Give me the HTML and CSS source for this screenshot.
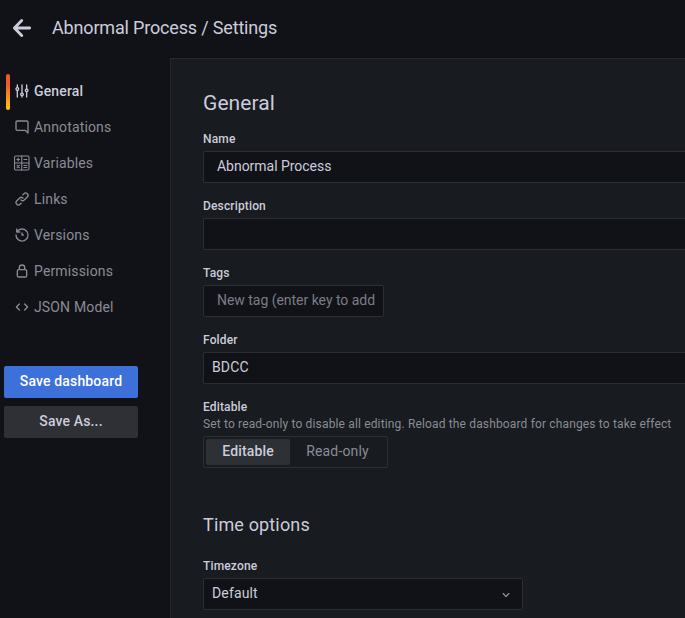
FILE: index.html
```html
<!DOCTYPE html>
<html lang="en">
<head>
<meta charset="utf-8">
<title>Abnormal Process / Settings</title>
<link rel="stylesheet" href="styles.css">
</head>
<body>
<header class="toolbar">
  <svg class="back" viewBox="0 0 20 20"><path d="M17.6 10H3M9.7 2.6 2.4 10l7.3 7.4"/></svg>
  <h1 class="page-title">Abnormal Process / Settings</h1>
</header>
<div class="layout">
  <aside class="sidebar">
    <nav class="menu">
      <a class="item active"><svg class="icon" viewBox="0 0 24 24"><path d="M20,8.18V3a1,1,0,0,0-2,0V8.18a3,3,0,0,0,0,5.64V21a1,1,0,0,0,2,0V13.82a3,3,0,0,0,0-5.64ZM19,12a1,1,0,1,1,1-1A1,1,0,0,1,19,12Zm-6,2.18V3a1,1,0,0,0-2,0V14.18a3,3,0,0,0,0,5.64V21a1,1,0,0,0,2,0V19.82a3,3,0,0,0,0-5.64ZM12,18a1,1,0,1,1,1-1A1,1,0,0,1,12,18ZM6,6.18V3A1,1,0,0,0,4,3V6.18a3,3,0,0,0,0,5.64V21a1,1,0,0,0,2,0V11.82A3,3,0,0,0,6,6.18ZM5,10A1,1,0,1,1,6,9,1,1,0,0,1,5,10Z"/></svg>General</a>
      <a class="item"><svg class="icon" viewBox="0 0 24 24"><path d="M19,2H5A3,3,0,0,0,2,5V15a3,3,0,0,0,3,3H16.59l3.7,3.71A1,1,0,0,0,21,22a.84.84,0,0,0,.38-.08A1,1,0,0,0,22,21V5A3,3,0,0,0,19,2Zm1,16.59-2.29-2.3A1,1,0,0,0,17,16H5a1,1,0,0,1-1-1V5A1,1,0,0,1,5,4H19a1,1,0,0,1,1,1Z"/></svg>Annotations</a>
      <a class="item"><svg class="icon line grid" viewBox="0 0 16 16"><rect x=".5" y="1" width="14.5" height="14" rx="1.4"/><path d="M7.75 1v14M.5 8H15M2.8 4.5h2.8M4.2 3.1v2.8M9.9 4.5h3M3.1 10.4l2.2 2.2M5.3 10.4l-2.2 2.2M9.9 10.5h3M9.9 12.5h3"/></svg>Variables</a>
      <a class="item"><svg class="icon" viewBox="0 0 24 24"><path d="M10,17.55,8.23,19.27a2.47,2.47,0,0,1-3.5-3.5l4.54-4.55a2.46,2.46,0,0,1,3.39-.09l.12.1a1,1,0,0,0,1.4-1.43A2.75,2.75,0,0,0,14,9.59a4.46,4.46,0,0,0-6.09.22L3.31,14.36a4.48,4.48,0,0,0,6.33,6.33L11.37,19A1,1,0,0,0,10,17.55ZM20.69,3.31a4.49,4.49,0,0,0-6.33,0L12.63,5A1,1,0,0,0,14,6.45l1.73-1.72a2.47,2.47,0,0,1,3.5,3.5l-4.54,4.55a2.46,2.46,0,0,1-3.39.09l-.12-.1a1,1,0,0,0-1.4,1.43,2.75,2.75,0,0,0,.23.21,4.47,4.47,0,0,0,6.09-.22l4.55-4.55A4.49,4.49,0,0,0,20.69,3.31Z"/></svg>Links</a>
      <a class="item"><svg class="icon" viewBox="0 0 24 24"><path d="M12,2A10,10,0,0,0,5.12,4.77V3a1,1,0,0,0-2,0V7.5a1,1,0,0,0,1,1H8.62a1,1,0,0,0,0-2H6.22A8,8,0,1,1,4,12a1,1,0,0,0-2,0A10,10,0,1,0,12,2Zm0,6a1,1,0,0,0-1,1v3a1,1,0,0,0,1,1h2a1,1,0,0,0,0-2H13V9A1,1,0,0,0,12,8Z"/></svg>Versions</a>
      <a class="item"><svg class="icon" viewBox="0 0 24 24"><path d="M17,9V7A5,5,0,0,0,7,7V9a3,3,0,0,0-3,3v7a3,3,0,0,0,3,3H17a3,3,0,0,0,3-3V12A3,3,0,0,0,17,9ZM9,7a3,3,0,0,1,6,0V9H9Zm9,12a1,1,0,0,1-1,1H7a1,1,0,0,1-1-1V12a1,1,0,0,1,1-1H17a1,1,0,0,1,1,1Z"/></svg>Permissions</a>
      <a class="item"><svg class="icon line code" viewBox="0 0 24 24"><path d="M8 7.6 3.6 12 8 16.4M16 7.6l4.4 4.4-4.4 4.4"/></svg>JSON Model</a>
    </nav>
    <div class="actions">
      <button class="btn primary">Save dashboard</button>
      <button class="btn">Save As...</button>
    </div>
  </aside>
  <main class="panel">
    <h2 class="heading">General</h2>
    <div class="field"><div class="label">Name</div><div class="input wide">Abnormal Process</div></div>
    <div class="field"><div class="label">Description</div><div class="input wide"></div></div>
    <div class="field"><div class="label">Tags</div><div class="input tags"><span class="placeholder">New tag (enter key to add</span></div></div>
    <div class="field"><div class="label">Folder</div><div class="input wide select">BDCC</div></div>
    <div class="field">
      <div class="label with-help">Editable</div>
      <div class="help">Set to read-only to disable all editing. Reload the dashboard for changes to take effect</div>
      <div class="radio"><span class="option on">Editable</span><span class="option">Read-only</span></div>
    </div>
    <h3 class="subheading">Time options</h3>
    <div class="field"><div class="label">Timezone</div><div class="input select timezone">Default<svg class="icon" viewBox="0 0 24 24"><path d="M17,9.17a1,1,0,0,0-1.41,0L12,12.71,8.46,9.17a1,1,0,0,0-1.41,0,1,1,0,0,0,0,1.42l4.24,4.24a1,1,0,0,0,1.42,0L17,10.59A1,1,0,0,0,17,9.17Z"/></svg></div></div>
  </main>
</div>
</body>
</html>
```
FILE: styles.css
```css
* { box-sizing: border-box; }
body {
  margin: 0;
  height: 618px;
  overflow: hidden;
  display: flex;
  flex-direction: column;
  background: #111217;
  color: #ccccdc;
  font: 400 14px/22px Roboto, sans-serif;
  letter-spacing: 0.15px;
}
h1, h2, h3 { margin: 0; font-weight: 400; }
.toolbar { flex: none; display: flex; align-items: center; height: 58px; padding: 0 0 2px 12px; }
.back { width: 20px; height: 20px; fill: none; stroke: currentColor; stroke-width: 2.9; stroke-linecap: round; stroke-linejoin: round; }
.page-title { margin-left: 20px; font-size: 18px; letter-spacing: -0.17px; }
.layout { flex: 1; min-height: 0; display: flex; }
.sidebar { flex: none; width: 170px; padding-top: 15px; }
.item { display: flex; align-items: center; gap: 4px; height: 36px; padding: 0 0 0 14px; color: #8a8b96; }
.icon { width: 16px; height: 16px; fill: currentColor; flex: none; }
.line { fill: none; stroke: currentColor; stroke-width: 1.8; stroke-linecap: round; stroke-linejoin: round; }
.code { stroke-width: 2; }
.grid { stroke-width: 1.1; }
.active { position: relative; color: #ccccdc; font-weight: 500; }
.active::before {
  content: "";
  position: absolute;
  left: 6px;
  top: 1px;
  width: 4px;
  height: 36px;
  border-radius: 2px;
  background: linear-gradient(#f05a28 30%, #fbca0a);
}
.actions { display: flex; flex-direction: column; gap: 8px; width: 134px; margin: 41px 0 0 4px; }
.btn {
  height: 32px;
  padding: 0 0 2px;
  border: 0;
  border-radius: 2px;
  background: #2f3035;
  color: #ccccdc;
  font: 500 14px/30px Roboto, sans-serif;
  letter-spacing: 0.15px;
}
.primary { background: #3d71d9; color: #fff; }
.panel {
  flex: 1;
  min-width: 0;
  padding: 32px 0 0 32px;
  border: 1px solid #25282d;
  border-width: 1px 0 0 1px;
  background: #181b1f;
}
.heading { height: 41px; font-size: 21px; line-height: 24px; letter-spacing: 0.08px; }
.field { margin-bottom: 16px; }
.label { margin-bottom: 4px; font-size: 12px; font-weight: 500; line-height: 15px; }
.input {
  display: flex;
  align-items: center;
  height: 32px;
  padding: 0 8px 2px 13px;
  border: 1px solid #2c2e34;
  border-radius: 2px;
  background: #111217;
  letter-spacing: -0.03px;
}
.wide { border-right: 0; border-radius: 2px 0 0 2px; }
.tags { width: 181px; }
.placeholder { white-space: nowrap; color: #7b7c87; }
.select { padding-left: 8px; letter-spacing: 0.15px; }
.timezone { width: 320px; justify-content: space-between; }
.timezone .icon { margin-top: 4px; color: #8a8b96; }
.with-help { margin-bottom: 1px; }
.help { margin-bottom: 4px; color: #8a8b96; font-size: 12px; line-height: 16px; white-space: nowrap; }
.radio { display: inline-flex; width: 185px; height: 32px; padding: 2px; border: 1px solid #2c2e34; border-radius: 2px; vertical-align: top; }
.option { flex: 1; color: #8a8b96; line-height: 24px; text-align: center; }
.on { flex: none; width: 84px; border-radius: 2px; background: #2d3035; color: #ccccdc; font-weight: 500; }
.subheading { margin: 46px 0 23px; font-size: 18px; line-height: 22px; letter-spacing: 0.15px; }
```
